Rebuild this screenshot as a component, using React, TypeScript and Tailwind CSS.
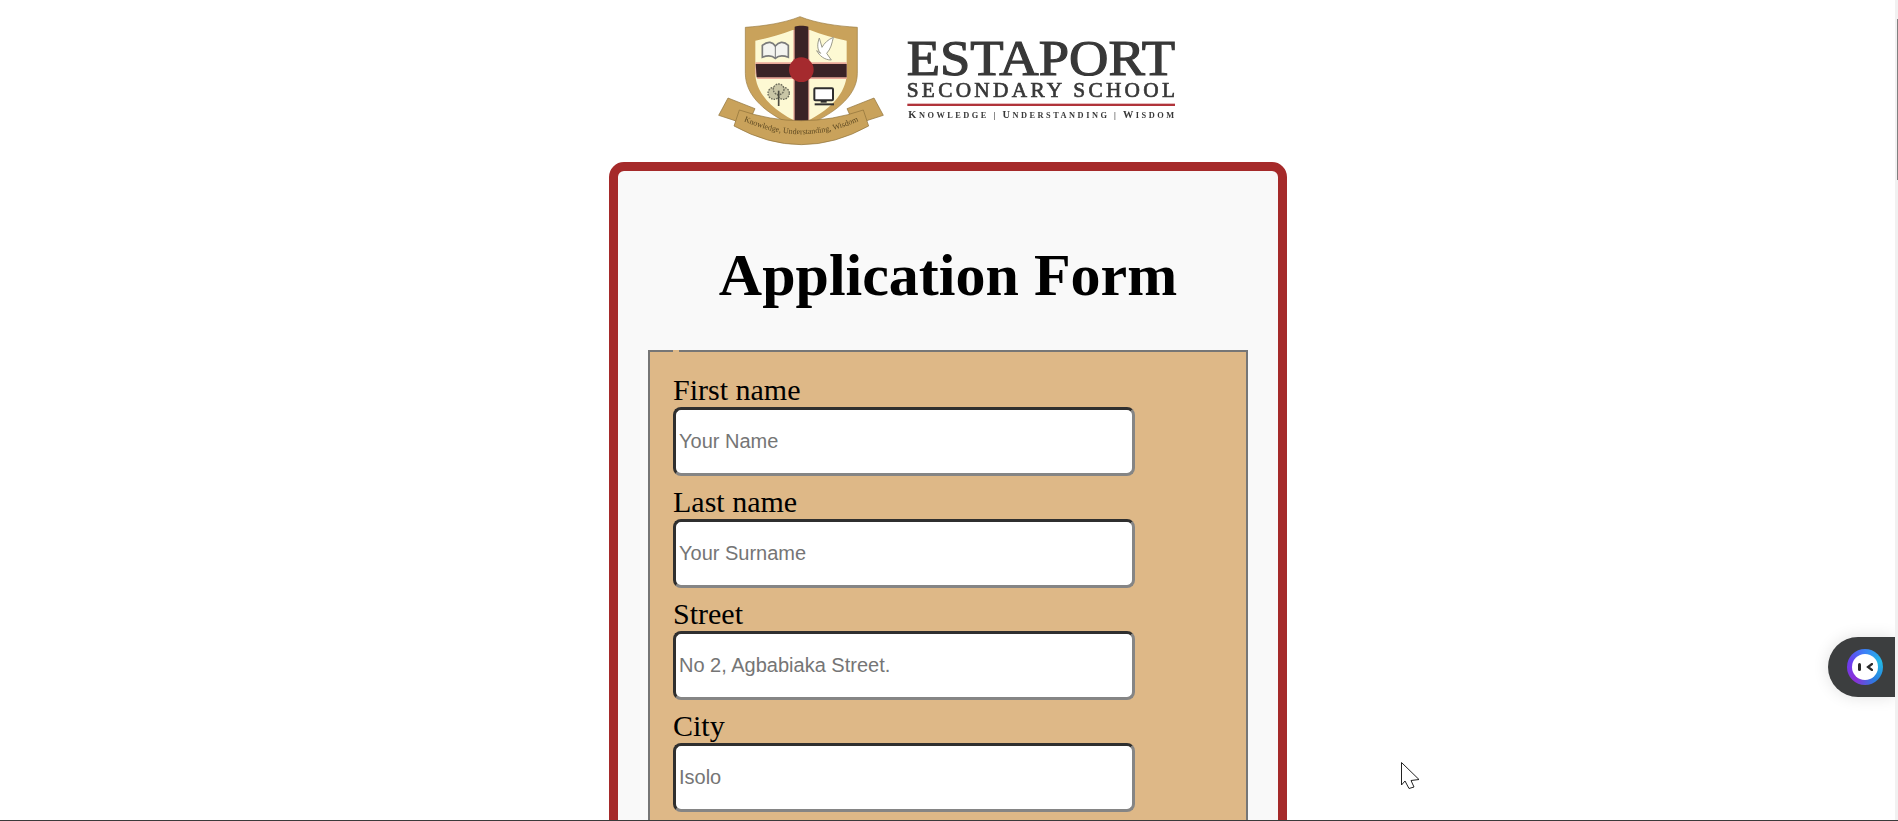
const fields = [
  { label: "First name", placeholder: "Your Name" },
  { label: "Last name", placeholder: "Your Surname" },
  { label: "Street", placeholder: "No 2, Agbabiaka Street." },
  { label: "City", placeholder: "Isolo" },
];

const Logo = () => (
  <svg width="495" height="160" viewBox="0 0 1485 480" className="mr-[2px] block blur-[0.6px]">
    {/* ribbon tails */}
    <path d="M84 294 L165 326 L135 392 L105 362 L56 346 Z" fill="#c9a25b" stroke="#8d7038" strokeWidth="2" />
    <path d="M522 294 L441 326 L471 392 L500 362 L550 346 Z" fill="#c9a25b" stroke="#8d7038" strokeWidth="2" />
    {/* shield */}
    <path d="M300 50 C250 70 190 78 136 82 L136 220 C136 290 200 345 300 385 C400 345 472 290 472 220 L472 82 C410 78 350 70 300 50 Z" fill="#c9a25b" stroke="#9a7c42" strokeWidth="2" />
    <path d="M278 90 C240 104 205 114 166 122 L166 220 C166 280 220 335 304 372 C388 335 440 280 440 220 L440 122 C400 114 365 104 330 90 Z" fill="#fdf9d3" />
    <path d="M280 90 H328 V362 H280 Z" fill="#e9a898" />
    <path d="M166 187 H440 V237 H172 L166 220 Z" fill="#e9a898" />
    <path d="M284 80 C295 76 313 76 325 80 V362 H284 Z" fill="#3a2326" />
    <path d="M167 192 H440 V232 H170 Z" fill="#3a2326" />
    <circle cx="304" cy="209" r="37" fill="#a52a2e" />
    {/* book */}
    <path d="M187 172 V136 C205 122 218 126 226 138 C236 126 250 122 265 136 V172 C250 166 236 166 226 175 C216 166 202 166 187 172 Z" fill="#f4f4f0" stroke="#7a7a7a" strokeWidth="5" />
    <path d="M226 138 V172" stroke="#7a7a7a" strokeWidth="3" />
    {/* dove */}
    <path d="M400 112 C385 118 372 130 366 142 L358 114 C352 130 350 148 362 160 L350 152 C358 166 372 180 394 180 L380 160 C392 148 396 130 400 112 Z" fill="#fff" stroke="#9a9a8a" strokeWidth="3" />
    {/* tree */}
    <circle cx="222" cy="280" r="18" fill="#c9c6a6" stroke="#6a6a5a" strokeWidth="4" strokeDasharray="5 3" />
    <circle cx="250" cy="280" r="18" fill="#c9c6a6" stroke="#6a6a5a" strokeWidth="4" strokeDasharray="5 3" />
    <circle cx="236" cy="268" r="16" fill="#c9c6a6" stroke="#6a6a5a" strokeWidth="4" strokeDasharray="5 3" />
    <path d="M236 272 V318" stroke="#4a4a40" strokeWidth="5" />
    {/* computer */}
    <rect x="343" y="265" width="56" height="36" rx="3" fill="#fff" stroke="#2e2e2e" strokeWidth="6" />
    <path d="M362 302 V308 H380 V302" fill="#2e2e2e" />
    <path d="M344 313 H402" stroke="#2e2e2e" strokeWidth="6" />
    {/* ribbon band */}
    <path d="M118 330 Q304 394 490 330 L506 378 Q304 490 102 378 Z" fill="#c9a25b" stroke="#8d7038" strokeWidth="2" />
    <path id="motto" d="M135 365 Q304 440 472 365" fill="none" />
    <text fontFamily="'Liberation Serif', serif" fontSize="24" fill="#5f4a22">
      <textPath href="#motto" startOffset="50%" textAnchor="middle">Knowledge, Understanding, Wisdom</textPath>
    </text>
    {/* wordmark */}
    <text x="620" y="225" fontFamily="'Liberation Serif', serif" fontSize="155" fill="#383838" stroke="#383838" strokeWidth="3.5" textLength="805" lengthAdjust="spacingAndGlyphs">ESTAPORT</text>
    <text x="620" y="291" fontFamily="'Liberation Serif', serif" fontSize="64" fill="#383838" stroke="#383838" strokeWidth="2" textLength="805" lengthAdjust="spacing">SECONDARY SCHOOL</text>
    <rect x="622" y="311" width="803" height="7" fill="#b0333a" />
    <text x="625" y="354" fontFamily="'Liberation Serif', serif" fontSize="25" fontWeight="bold" fill="#383838" textLength="797" lengthAdjust="spacing">
      <tspan fontSize="31">K</tspan>NOWLEDGE | <tspan fontSize="31">U</tspan>NDERSTANDING | <tspan fontSize="31">W</tspan>ISDOM
    </text>
  </svg>
);

const App = () => {
  return (
    <div className="relative h-[821px] overflow-hidden bg-white font-['Liberation_Serif',serif] text-black">
      <div className="flex flex-col items-center pr-[2px]">
        <Logo />

        <div className="mt-[2px] w-[678px] rounded-[15px] border-[9px] border-[#a52a2a] bg-[#f9f9f9] px-[30px]">
          <h1 className="mt-[70px] mb-[41px] text-center text-[60px] leading-[68px] font-bold">Application Form</h1>

          <fieldset className="border-2 border-[#767676] bg-[#deb887] px-[23px] pt-[21px] pb-[60px]">
            <legend className="h-0 w-[6px]"></legend>
            <div className="flex flex-col gap-[9px]">
              {fields.map((field) => (
                <div key={field.label} className="flex flex-col">
                  <label className="h-[34px] text-[30px] leading-[33px]">{field.label}</label>
                  <input
                    type="text"
                    placeholder={field.placeholder}
                    className="h-[69px] w-[462px] rounded-[8px] border-[3px] border-t-[#2f2f2f] border-r-[#858585] border-b-[#858585] border-l-[#2f2f2f] bg-white px-[3px] font-['Liberation_Sans',sans-serif] text-[20px] placeholder:text-[#757575]"
                  />
                </div>
              ))}
            </div>
          </fieldset>
        </div>
      </div>

      {/* floating assistant button */}
      <div className="absolute top-[637px] right-[3px] flex h-[60px] w-[67px] items-center rounded-l-[30px] bg-[#3c3e3f] pl-[19px] shadow-[0_0_16px_rgba(0,0,0,0.12)]">
        <div className="flex h-[36px] w-[36px] items-center justify-center rounded-full bg-[conic-gradient(#3b82f6,#22b8e6,#2a7de1,#8b2fd6,#6a3df0,#3b82f6)]">
          <div className="flex h-[26px] w-[26px] items-center justify-center gap-[5px] rounded-full bg-white">
            <span className="h-[8px] w-[3px] rounded-full bg-[#2b2b2b]"></span>
            <svg width="7" height="8" viewBox="0 0 7 8">
              <path d="M6 1 L2 4 L6 7" fill="none" stroke="#2b2b2b" strokeWidth="2.2" strokeLinecap="round" />
            </svg>
          </div>
        </div>
      </div>

      {/* mouse cursor */}
      <svg width="20" height="28" viewBox="0 0 20 28" className="absolute top-[762px] left-[1401px]">
        <path d="M0.5 0.5 V23 L4 19 L8 26.5 L13 25 L10 18.5 L18 17.5 Z" fill="#fff" stroke="#222" strokeWidth="1" />
      </svg>

      {/* scrollbar */}
      <div className="absolute top-0 right-0 h-full w-[3px] bg-[#f1f1f1]">
        <div className="absolute top-[19px] right-0 h-[161px] w-[1px] bg-[#808080]"></div>
      </div>

      {/* window edge */}
      <div className="absolute right-0 bottom-0 left-0 h-[1px] bg-[#3a3a3a]"></div>
    </div>
  );
};

export default App;
